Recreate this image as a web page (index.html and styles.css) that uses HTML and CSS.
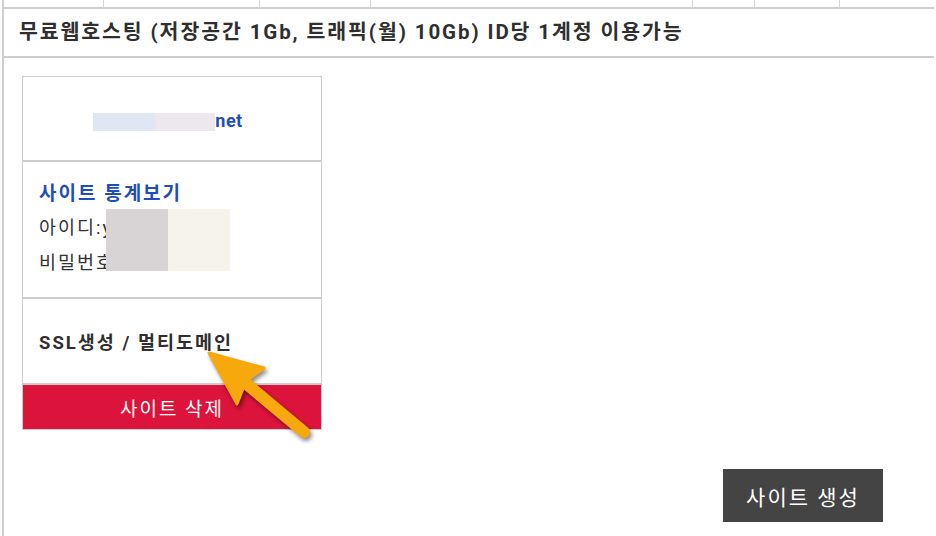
FILE: index.html
```html
<!DOCTYPE html>
<html lang="ko">
<head>
<meta charset="utf-8">
<title>무료웹호스팅</title>
<link rel="stylesheet" href="styles.css">
</head>
<body>
<div class="page">
  <div class="topbar">
    <div class="cell c1"></div>
    <div class="cell c2"></div>
    <div class="cell c3"></div>
    <div class="cell c4"></div>
    <div class="cell c5"></div>
    <div class="cell c6"></div>
    <div class="cell c7"></div>
  </div>
  <div class="title">무료웹호스팅 (저장공간 1Gb, 트래픽(월) 10Gb) ID당 1계정 이용가능</div>
  <div class="content">
    <div class="card">
      <div class="sec sec-domain">
        <span class="domain"><span class="redact-a"></span>net</span>
      </div>
      <div class="sec sec-info">
        <div class="stat-link">사이트 통계보기</div>
        <div class="line">아이디:y</div>
        <div class="line">비밀번호</div>
        <div class="redact-b"></div>
      </div>
      <div class="sec sec-ssl">
        <span class="ssl">SSL생성 / 멀티도메인</span>
      </div>
      <div class="btn-delete">사이트 삭제</div>
    </div>
    <div class="footer">
      <div class="btn-create">사이트 생성</div>
    </div>
  </div>
  <svg class="arrow" width="936" height="536" viewBox="0 0 936 536" xmlns="http://www.w3.org/2000/svg">
    <g class="arrow-g">
      <line x1="243" y1="381" x2="304" y2="432" stroke="#f6a80d" stroke-width="12" stroke-linecap="round"/>
      <polygon points="209,353 264,368 246,381 237,404" fill="#f6a80d" stroke="#f6a80d" stroke-width="3" stroke-linejoin="round"/>
    </g>
  </svg>
</div>
</body>
</html>
```
FILE: styles.css
```css
* { box-sizing: border-box; }
html, body { margin: 0; padding: 0; background: #fff; }
body {
  font-family: Roboto, "Noto Sans CJK KR", sans-serif;
  color: #333;
  letter-spacing: 2px;
}
.page {
  position: relative;
  width: 932px;
  height: 536px;
  overflow: hidden;
  margin-left: 2px;
  border-left: 2px solid #cfcfcf;
}
.topbar {
  display: flex;
  height: 9px;
  border-bottom: 2px solid #cfcfcf;
  margin-left: -4px;
}
.cell { border-right: 1px solid #d4d4d4; height: 7px; }
.c1 { width: 104px; }
.c2 { width: 156px; }
.c3 { width: 111px; }
.c4 { width: 322px; }
.c5 { width: 62px; }
.c6 { width: 85px; }
.c7 { flex: 1; border-right: none; }
.title {
  height: 49px;
  line-height: 46px;
  font-size: 20.5px;
  letter-spacing: 1.9px;
  font-weight: 700;
  color: #2f2f2f;
  border-bottom: 2px solid #cfcfcf;
  margin-left: -4px;
  padding-left: 19px;
  white-space: nowrap;
}
.content {
  padding: 18px 0 0 18px;
}
.card {
  width: 300px;
  display: flex;
  flex-direction: column;
}
.sec {
  border: 1px solid #cdcdcd;
  background: #fff;
}
.sec-domain {
  height: 85px;
  display: flex;
  align-items: center;
  justify-content: center;
  padding: 3px 8px 0 0;
}
.domain {
  display: flex;
  align-items: center;
  font-size: 18px;
  font-weight: 700;
  color: #1e4fb8;
  letter-spacing: 0.5px;
}
.redact-a {
  display: inline-block;
  width: 122px;
  height: 18px;
  margin-top: 3px;
  background: linear-gradient(to right, #e0e7f4 0, #e0e7f4 62px, #ede7ee 62px, #ede7ee 122px);
}
.sec-info {
  position: relative;
  height: 137px;
  padding: 14px 16px 0 16px;
  font-size: 18.5px;
  line-height: 35px;
}
.stat-link {
  color: #1e4fb8;
  font-weight: 700;
  font-size: 19px;
}
.line { color: #333; }
.redact-b {
  position: absolute;
  left: 83px;
  top: 47px;
  width: 124px;
  height: 62px;
  background: linear-gradient(to right, #d8d4d5 0, #d8d4d5 62px, #f6f2ec 62px, #f6f2ec 124px);
}
.sec-ssl {
  height: 86px;
  display: flex;
  align-items: center;
  padding: 0 16px;
}
.ssl {
  font-size: 18.5px;
  font-weight: 700;
  color: #2f2f2f;
}
.btn-delete {
  height: 46px;
  border: 1px solid #cdcdcd;
  background: #dc143c;
  color: #fff;
  font-size: 19px;
  display: flex;
  align-items: center;
  justify-content: center;
}
.footer {
  display: flex;
  justify-content: flex-end;
  padding-right: 51px;
  margin-top: 39px;
}
.btn-create {
  width: 160px;
  height: 53px;
  background: #444;
  color: #fff;
  font-size: 21px;
  display: flex;
  align-items: center;
  justify-content: center;
}
.arrow {
  position: absolute;
  left: -4px;
  top: 0;
  pointer-events: none;
}
.arrow-g {
  filter: drop-shadow(2px 3px 2px rgba(0,0,0,0.45));
}
```
